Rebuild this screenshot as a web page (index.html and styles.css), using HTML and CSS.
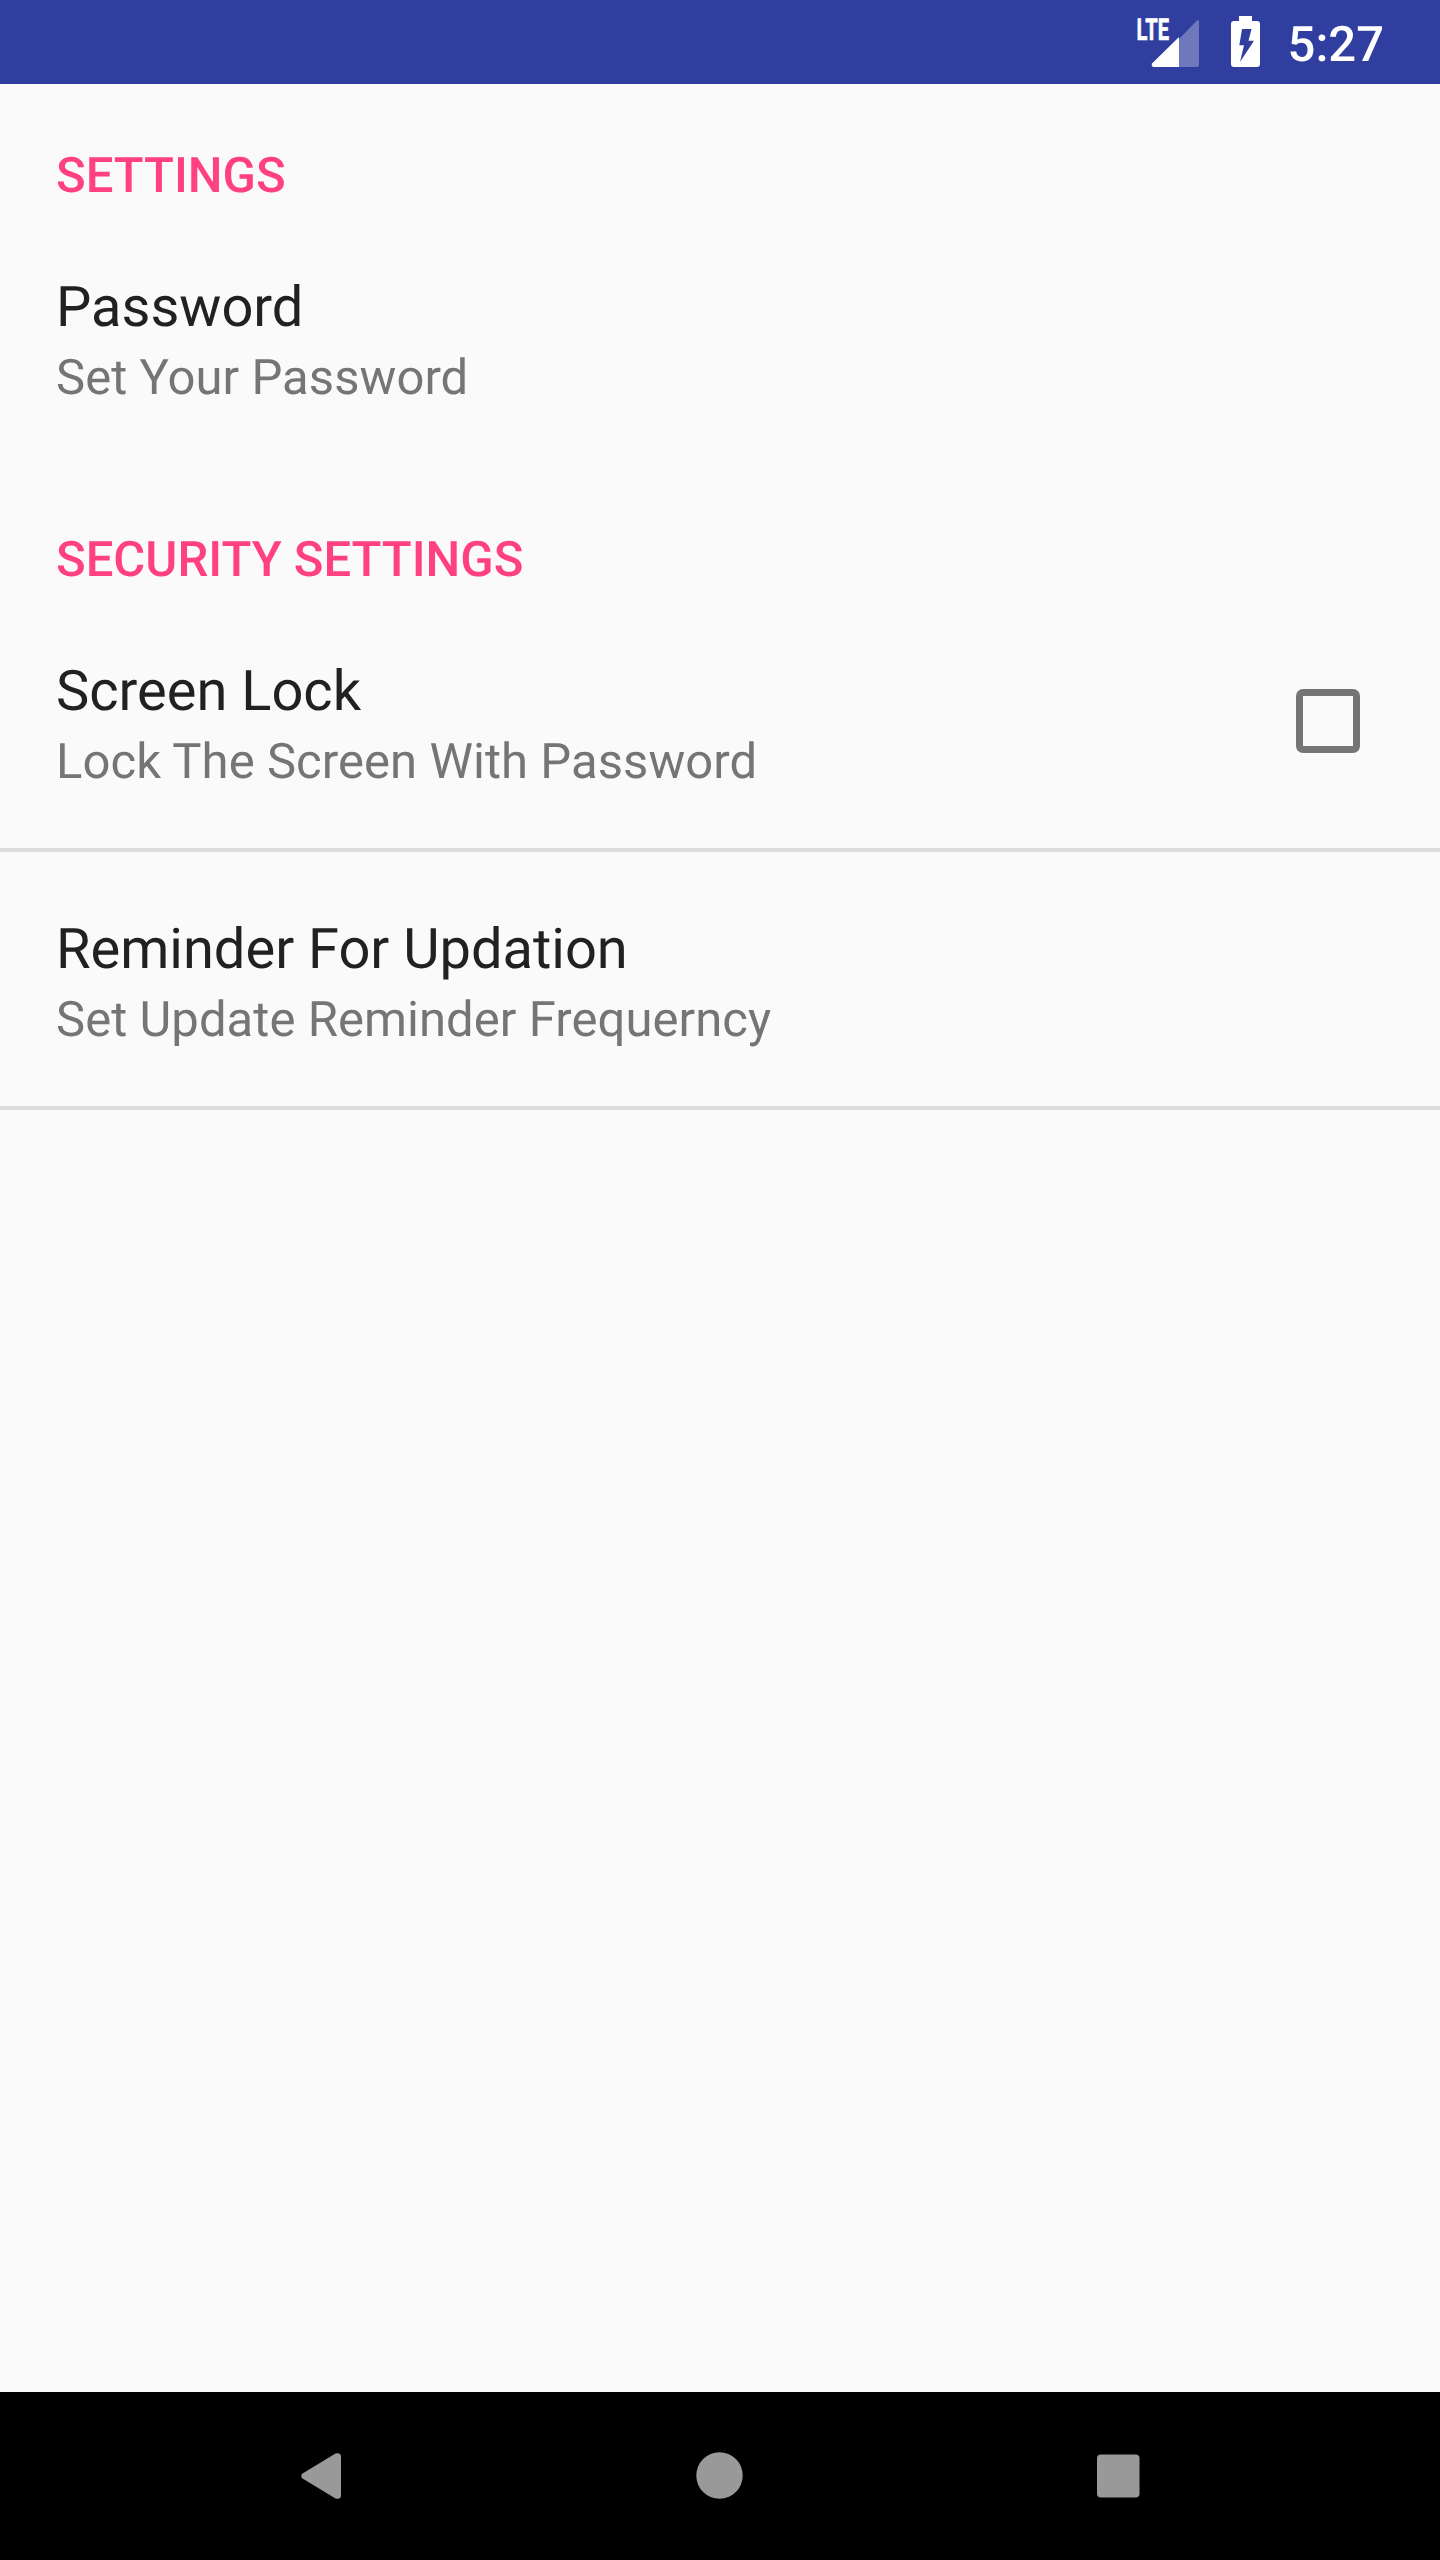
FILE: index.html
```html
<!DOCTYPE html>
<html lang="en">
<head>
<meta charset="utf-8">
<title>Settings</title>
<link rel="stylesheet" href="styles.css">
</head>
<body>
<header class="status-bar">
  <svg class="signal" width="68" height="66" viewBox="-4 -10 68 66">
    <path class="signal-dim" d="M42 24L60 5.5Q62 4 62 7V50Q62 52 60 52H42Z"/>
    <path class="solid" d="M42 22V52H16.5Q14 51.500 15 48.500Z"/>
    <text class="lte" x="-.5" y="24.500" textLength="32.500" lengthAdjust="spacingAndGlyphs">LTE</text>
  </svg>
  <svg class="battery" width="30" height="52" viewBox="0 0 30 52">
    <path class="solid" fill-rule="evenodd" d="M8 0H21V5H26Q29 5 29 8V48Q29 51 26 51H3Q0 51 0 48V8Q0 5 3 5H8ZM11 13L8.300 29.200H13L9 46L23 24.700H17.500L20.500 13Z"/>
  </svg>
  <span class="clock">5:27</span>
</header>
<main class="settings">
  <h2 class="category">SETTINGS</h2>
  <section class="preference">
    <div class="label"><p class="title">Password</p><p class="summary">Set Your Password</p></div>
  </section>
  <h2 class="category">SECURITY SETTINGS</h2>
  <section class="preference divided">
    <div class="label"><p class="title">Screen Lock</p><p class="summary">Lock The Screen With Password</p></div>
    <span class="checkbox" role="checkbox" aria-checked="false"></span>
  </section>
  <section class="preference divided spaced">
    <div class="label"><p class="title">Reminder For Updation</p><p class="summary">Set Update Reminder Frequerncy</p></div>
  </section>
</main>
<nav class="nav-bar">
  <svg class="nav-icons" width="1440" height="168" viewBox="0 0 1440 168">
    <path d="M302.500 81.500L335.500 61.500Q341 60 341 65V103Q341 108 335.500 106.500L302.500 86.500Q300 84 302.500 81.500Z"/>
    <circle cx="719.500" cy="83.500" r="23.200"/>
    <rect x="1097" y="62.500" width="42.500" height="43" rx="4"/>
  </svg>
</nav>
</body>
</html>
```
FILE: styles.css
```css
* { box-sizing: border-box; }
body { margin: 0; height: 2560px; display: flex; flex-direction: column; background: #fafafa; font-family: Roboto, sans-serif; text-rendering: geometricPrecision; }
.status-bar { height: 84px; background: #303f9f; display: flex; align-items: flex-start; padding: 5px 56px 0 1133px; }
.solid { fill: #fff; }
.signal { flex: none; }
.signal-dim { fill: #fff; fill-opacity: .3; }
.lte { fill: #fff; stroke: #fff; stroke-width: .6px; font: 700 30px Roboto, sans-serif; }
.battery { flex: none; margin: 11px 0 0 30px; }
.clock { margin: 11px 0 0 auto; color: #fff; font-size: 49px; font-weight: 500; line-height: 58px; }
.settings { flex: 1; }
.category { margin: 0; padding: 63px 56px 0; height: 148px; font-size: 49px; font-weight: 500; line-height: 58px; color: #ff4081; }
.preference { height: 236px; padding: 42px 56px; display: flex; }
.divided { border-bottom: 4px solid #dcdcdc; }
.spaced { height: 258px; padding-top: 64px; }
.label { flex: 1; }
.title, .summary { margin: 0; }
.title { font-size: 56px; line-height: 66px; color: #212121; }
.summary { font-size: 49px; line-height: 58px; padding-top: 9px; letter-spacing: .06px; color: #757575; }
.checkbox { width: 64px; height: 64px; margin: 31px 24px 0 0; border: 7px solid #757575; border-radius: 7px; }
.nav-bar { height: 168px; background: #000; }
.nav-icons { display: block; fill: #999; }
```
